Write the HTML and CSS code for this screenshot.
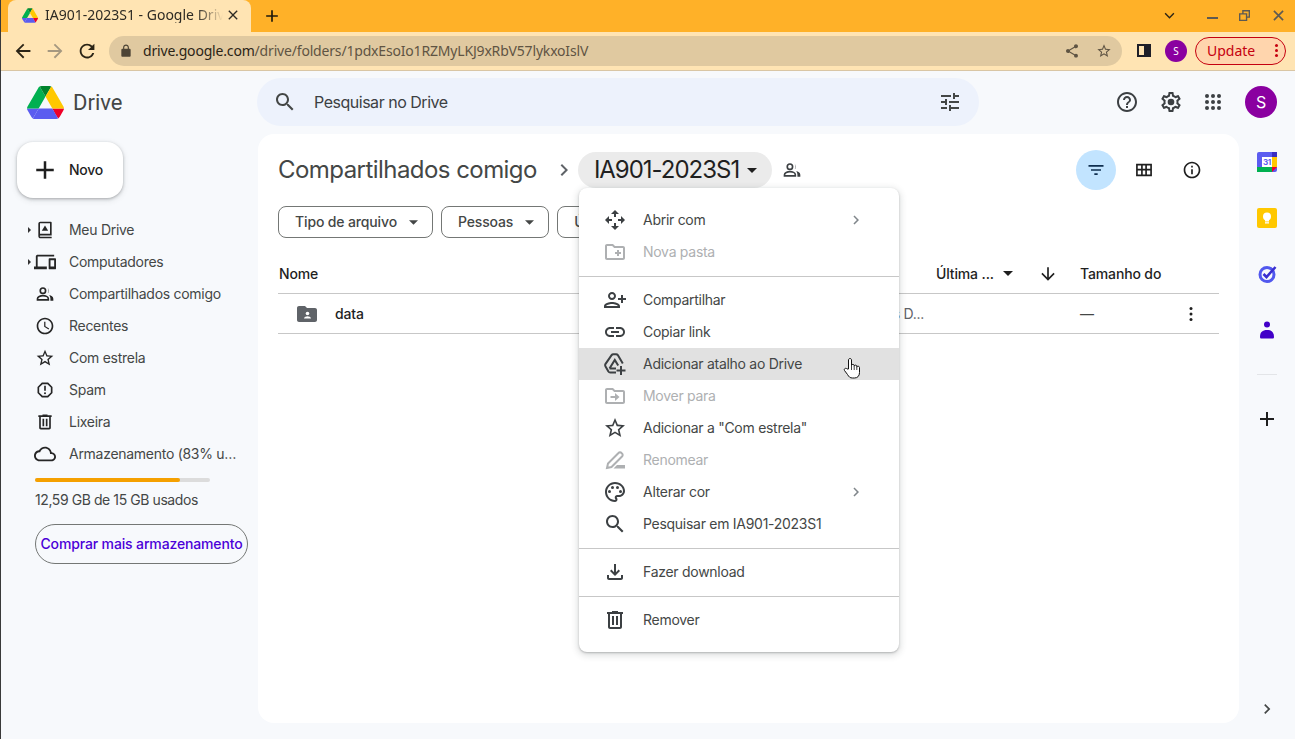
FILE: index.html
```html
<!DOCTYPE html>
<html lang="pt-BR">
<head>
  <meta charset="utf-8">
  <meta name="viewport" content="width=device-width,initial-scale=1">
  <title>IA901-2023S1 - Google Drive</title>
  <link rel="stylesheet" href="styles.css">
</head>
<body>
  <svg class="sprite" aria-hidden="true">
    <symbol id="i-drive" viewBox="0 0 87.3 78">
      <path d="m6.6 66.85 3.85 6.65c.8 1.4 1.95 2.5 3.3 3.3l13.75-23.8h-27.5c0 1.55.4 3.1 1.2 4.5z" fill="#5b5cf0"/>
      <path d="m43.65 25-13.75-23.8c-1.35.8-2.5 1.9-3.3 3.3l-25.4 44a9.06 9.06 0 0 0 -1.2 4.5h27.5z" fill="#00b050"/>
      <path d="m73.55 76.8c1.35-.8 2.5-1.9 3.3-3.3l1.6-2.75 7.65-13.25c.8-1.4 1.2-2.95 1.2-4.5h-27.502l5.852 11.5z" fill="#f00028"/>
      <path d="m43.65 25 13.75-23.8c-1.35-.8-2.9-1.2-4.5-1.2h-18.5c-1.6 0-3.15.45-4.5 1.2z" fill="#00832d"/>
      <path d="m59.8 53h-32.3l-13.75 23.8c1.35.8 2.9 1.2 4.5 1.2h50.8c1.6 0 3.15-.45 4.5-1.2z" fill="#5b5cf0"/>
      <path d="m73.4 26.5-12.7-22c-.8-1.4-1.95-2.5-3.3-3.3l-13.75 23.8 16.15 28h27.45c0-1.55-.4-3.1-1.2-4.5z" fill="#ffc800"/>
    </symbol>
    <symbol id="i-search" viewBox="0 0 24 24"><path d="M15.5 14h-.79l-.28-.27C15.41 12.59 16 11.11 16 9.5 16 5.91 13.09 3 9.5 3S3 5.91 3 9.5 5.91 16 9.5 16c1.61 0 3.09-.59 4.23-1.57l.27.28v.79l5 4.99L20.49 19l-4.99-5zm-6 0C7.01 14 5 11.99 5 9.5S7.01 5 9.5 5 14 7.01 14 9.5 11.99 14 9.5 14z"/></symbol>
    <symbol id="i-people" viewBox="0 0 24 24">
      <circle cx="9.500" cy="8" r="3.200" fill="none" stroke="currentColor" stroke-width="2"/>
      <path d="M3 19v-1.300c0-2.300 3.500-3.700 6.500-3.700s6.500 1.400 6.500 3.700V19z" fill="none" stroke="currentColor" stroke-width="2"/>
      <path d="M14.500 4.500a3.800 3.800 0 0 1 0 7c2.400-1.300 2.400-5.700 0-7zM17 13.200c2.400.5 5 1.800 5 4.500V20h-3.500v-2.300c0-1.800-.6-3.300-1.500-4.500z"/>
    </symbol>
    <symbol id="i-star" viewBox="0 0 24 24"><path d="M22 9.24l-7.19-.62L12 2 9.19 8.63 2 9.24l5.46 4.73L5.82 21 12 17.27 18.18 21l-1.63-7.03L22 9.24zM12 15.4l-3.76 2.27 1-4.28-3.32-2.88 4.38-.38L12 6.1l1.71 4.04 4.38.38-3.32 2.88 1 4.28L12 15.4z"/></symbol>
    <symbol id="i-trash" viewBox="0 0 24 24"><path d="M15 4V3H9v1H4v2h1v13c0 1.1.9 2 2 2h10c1.1 0 2-.9 2-2V6h1V4h-5zm2 15H7V6h10v13z"/><path d="M9 8h2v9H9zm4 0h2v9h-2z"/></symbol>
    <symbol id="i-chev" viewBox="0 0 24 24"><path d="M10 6L8.59 7.41 13.17 12l-4.58 4.59L10 18l6-6z"/></symbol>
    <symbol id="i-caret" viewBox="0 0 10 5"><path d="M0 0l5 5 5-5z"/></symbol>
    <symbol id="i-plus" viewBox="0 0 24 24"><path d="M19 13h-6v6h-2v-6H5v-2h6V5h2v6h6v2z"/></symbol>
    <symbol id="i-move" viewBox="0 0 24 24"><path d="M20 6h-8l-2-2H4c-1.1 0-2 .9-2 2v12c0 1.1.9 2 2 2h16c1.1 0 2-.9 2-2V8c0-1.1-.9-2-2-2zm0 12H4V6h5.17l2 2H20v10zm-8-1l4.500-4-4.500-4v3H7.500v2H12z"/></symbol>
  </svg>

  <div class="tabstrip">
    <div class="tab">
      <svg class="tab-favicon"><use href="#i-drive"/></svg>
      <span class="tab-title">IA901-2023S1 - Google Drive</span>
      <svg class="ic-16" viewBox="0 0 24 24"><path d="M19 6.41L17.59 5 12 10.59 6.41 5 5 6.41 10.59 12 5 17.59 6.41 19 12 13.41 17.59 19 19 17.59 13.41 12z"/></svg>
    </div>
    <svg class="new-tab"><use href="#i-plus"/></svg>
    <div class="window-btns">
      <svg class="win-chevron" viewBox="0 0 12 8"><path d="M1 1.5l5 5 5-5" fill="none" stroke="#2b2416" stroke-width="1.6"/></svg>
      <span class="win-min"></span>
      <svg class="win-max" viewBox="0 0 12 12"><path d="M3.5 0H12v8.500H9V12H0V3.500H3.500zM5 1.500V3.500H9V7H10.500V1.500zM1.500 5V10.500H7.500V5z" fill="#5e5a52"/></svg>
      <svg class="win-close" viewBox="0 0 12 12"><path d="M1 1l10 10M11 1L1 11" stroke="#5e5a52" stroke-width="1.800"/></svg>
    </div>
  </div>

  <div class="toolbar">
    <svg class="tool-ic"><path d="M20 11H7.83l5.59-5.59L12 4l-8 8 8 8 1.41-1.41L7.83 13H20v-2z" transform="scale(.92)"/></svg>
    <svg class="tool-ic is-off"><path d="M12 4l-1.41 1.41L16.17 11H4v2h12.17l-5.58 5.59L12 20l8-8z" transform="scale(.92)"/></svg>
    <svg class="tool-ic"><path d="M17.65 6.350C16.200 4.900 14.210 4 12 4c-4.420 0-7.990 3.580-7.990 8s3.570 8 7.990 8c3.730 0 6.840-2.550 7.730-6h-2.080c-.82 2.330-3.040 4-5.650 4-3.310 0-6-2.690-6-6s2.690-6 6-6c1.660 0 3.140.69 4.220 1.780L13 11h7V4l-2.350 2.350z" transform="scale(.92)"/></svg>
    <div class="omnibox">
      <svg class="ic-14 omni-lock" viewBox="0 0 24 24"><path d="M18 8h-1V6c0-2.760-2.240-5-5-5S7 3.240 7 6v2H6c-1.100 0-2 .9-2 2v10c0 1.100.9 2 2 2h12c1.100 0 2-.9 2-2V10c0-1.100-.9-2-2-2zM9 6c0-1.660 1.340-3 3-3s3 1.340 3 3v2H9V6z"/></svg>
      <span class="url"><b>drive.google.com</b>/drive/folders/1pdxEsoIo1RZMyLKJ9xRbV57lykxoIslV</span>
      <svg class="ic-16 omni-share" viewBox="0 0 24 24"><path d="M18 16.080c-.76 0-1.440.3-1.960.77L8.910 12.700c.05-.23.09-.46.09-.7s-.04-.47-.09-.7l7.050-4.110c.54.5 1.250.81 2.040.81 1.660 0 3-1.340 3-3s-1.340-3-3-3-3 1.340-3 3c0 .24.04.47.09.7L8.040 9.810C7.500 9.310 6.790 9 6 9c-1.660 0-3 1.340-3 3s1.340 3 3 3c.79 0 1.500-.31 2.040-.81l7.120 4.160c-.05.21-.08.43-.08.65 0 1.610 1.310 2.920 2.920 2.920s2.920-1.310 2.920-2.920-1.310-2.920-2.920-2.920z"/></svg>
      <svg class="ic-16 omni-star"><use href="#i-star"/></svg>
    </div>
    <span class="side-panel"></span>
    <span class="chrome-avatar">S</span>
    <span class="update">Update<i class="update-dots"></i></span>
  </div>

  <div class="app">
    <header class="topbar">
      <div class="brand">
        <svg class="brand-logo"><use href="#i-drive"/></svg>
        <span class="brand-name">Drive</span>
      </div>
      <div class="search">
        <svg class="ic-24"><use href="#i-search"/></svg>
        <span class="search-text">Pesquisar no Drive</span>
        <svg class="ic-24 search-tune" viewBox="0 0 24 24"><path d="M3 17v2h6v-2H3zM3 5v2h10V5H3zm10 16v-2h8v-2h-8v-2h-2v6h2zM7 9v2H3v2h4v2h2V9H7zm14 4v-2H11v2h10zm-6-4h2V7h4V5h-4V3h-2v6z"/></svg>
      </div>
      <div class="top-actions">
        <svg class="ic-24" viewBox="0 0 24 24"><path d="M11 18h2v-2h-2v2zm1-16C6.480 2 2 6.480 2 12s4.480 10 10 10 10-4.480 10-10S17.520 2 12 2zm0 18c-4.410 0-8-3.590-8-8s3.590-8 8-8 8 3.590 8 8-3.590 8-8 8zm0-14c-2.210 0-4 1.790-4 4h2c0-1.100.9-2 2-2s2 .9 2 2c0 2-3 1.750-3 5h2c0-2.250 3-2.500 3-5 0-2.210-1.790-4-4-4z"/></svg>
        <svg class="ic-24" viewBox="0 0 24 24"><path d="M19.430 12.980c.04-.32.07-.64.07-.98 0-.34-.03-.66-.07-.98l2.110-1.650c.19-.15.24-.42.12-.64l-2-3.460c-.09-.16-.26-.25-.44-.25-.06 0-.12.01-.17.03l-2.490 1c-.52-.4-1.080-.73-1.690-.98l-.38-2.650C14.460 2.180 14.250 2 14 2h-4c-.25 0-.46.18-.49.42l-.38 2.650c-.61.25-1.170.59-1.690.98l-2.490-1c-.06-.02-.12-.03-.18-.03-.17 0-.34.09-.43.25l-2 3.460c-.13.22-.07.49.12.64l2.110 1.650c-.04.32-.07.65-.07.98 0 .33.03.66.07.98l-2.110 1.650c-.19.15-.24.42-.12.64l2 3.460c.09.16.26.25.44.25.06 0 .12-.01.17-.03l2.490-1c.52.4 1.080.73 1.690.98l.38 2.650c.03.24.24.42.49.42h4c.25 0 .46-.18.49-.42l.38-2.650c.61-.25 1.170-.59 1.690-.98l2.490 1c.06.02.12.03.18.03.17 0 .34-.09.43-.25l2-3.460c.12-.22.07-.49-.12-.64l-2.110-1.650zm-1.980-1.710c.04.31.05.52.05.73 0 .21-.02.43-.05.73l-.14 1.130.89.7 1.080.84-.7 1.210-1.270-.51-1.040-.42-.9.68c-.43.32-.84.56-1.250.73l-1.060.43-.16 1.130-.2 1.350h-1.400l-.19-1.350-.16-1.130-1.060-.43c-.43-.18-.83-.41-1.230-.71l-.91-.7-1.060.43-1.270.51-.7-1.210 1.080-.84.89-.7-.14-1.130c-.03-.31-.05-.54-.05-.74s.02-.43.05-.73l.14-1.130-.89-.7-1.080-.84.7-1.210 1.270.51 1.040.42.9-.68c.43-.32.84-.56 1.250-.73l1.060-.43.16-1.130.2-1.350h1.390l.19 1.350.16 1.130 1.060.43c.43.18.83.41 1.230.71l.91.7 1.060-.43 1.270-.51.7 1.210-1.070.85-.89.7.14 1.130z"/><circle cx="12" cy="12" r="3.300"/></svg>
        <svg class="ic-24 apps" viewBox="0 0 24 24"><circle cx="6" cy="6" r="2"/><circle cx="12" cy="6" r="2"/><circle cx="18" cy="6" r="2"/><circle cx="6" cy="12" r="2"/><circle cx="12" cy="12" r="2"/><circle cx="18" cy="12" r="2"/><circle cx="6" cy="18" r="2"/><circle cx="12" cy="18" r="2"/><circle cx="18" cy="18" r="2"/></svg>
        <span class="avatar">S</span>
      </div>
    </header>

    <div class="workspace">
      <aside class="sidebar">
        <div class="new-btn">
          <svg class="new-plus"><use href="#i-plus"/></svg>
          <span>Novo</span>
        </div>
        <nav class="nav">
          <div class="nav-item has-arrow">
            <svg class="ic-20" viewBox="0 0 24 24"><path d="M19 2H6.500C5.100 2 4 3.100 4 4.500v15C4 20.900 5.100 22 6.500 22H20v-2H6.500a.5.5 0 0 1 0-1.500H20V3a1 1 0 0 0-1-1zm-1 14.500H6V4h12z"/><path d="M12 6.500l3.800 6.500H8.200z"/></svg>
            <span>Meu Drive</span>
          </div>
          <div class="nav-item has-arrow">
            <svg class="ic-20 icon-wide" viewBox="0 0 24 24"><path d="M4 6h18V4H4c-1.100 0-2 .9-2 2v11H0v3h14v-3H4V6zm19 2h-6c-.55 0-1 .45-1 1v10c0 .55.45 1 1 1h6c.55 0 1-.45 1-1V9c0-.55-.45-1-1-1zm-1 9h-4v-7h4v7z"/></svg>
            <span>Computadores</span>
          </div>
          <div class="nav-item">
            <svg class="ic-20"><use href="#i-people"/></svg>
            <span>Compartilhados comigo</span>
          </div>
          <div class="nav-item">
            <svg class="ic-20" viewBox="0 0 24 24"><path d="M11.990 2C6.470 2 2 6.480 2 12s4.470 10 9.990 10C17.520 22 22 17.520 22 12S17.520 2 11.990 2zM12 20c-4.420 0-8-3.580-8-8s3.580-8 8-8 8 3.580 8 8-3.580 8-8 8zm.5-13H11v6l5.250 3.150.75-1.230-4.500-2.670z"/></svg>
            <span>Recentes</span>
          </div>
          <div class="nav-item">
            <svg class="ic-20"><use href="#i-star"/></svg>
            <span>Com estrela</span>
          </div>
          <div class="nav-item">
            <svg class="ic-20" viewBox="0 0 24 24"><path d="M15.730 3H8.270L3 8.270v7.460L8.270 21h7.460L21 15.730V8.270L15.730 3zM19 14.900L14.900 19H9.100L5 14.900V9.100L9.100 5h5.800L19 9.100v5.800z"/><path d="M11 7h2v6h-2z"/><circle cx="12" cy="16" r="1.200"/></svg>
            <span>Spam</span>
          </div>
          <div class="nav-item">
            <svg class="ic-20"><use href="#i-trash"/></svg>
            <span>Lixeira</span>
          </div>
          <div class="nav-item">
            <svg class="ic-20 icon-wide" viewBox="0 0 24 24"><path d="M19.350 10.040C18.670 6.590 15.640 4 12 4 9.110 4 6.600 5.640 5.350 8.040 2.340 8.360 0 10.910 0 14c0 3.310 2.690 6 6 6h13c2.760 0 5-2.240 5-5 0-2.640-2.050-4.780-4.650-4.960zM19 18H6c-2.210 0-4-1.790-4-4s1.790-4 4-4h.71C7.370 7.690 9.480 6 12 6c3.040 0 5.500 2.460 5.500 5.500v.5H19c1.660 0 3 1.340 3 3s-1.340 3-3 3z"/></svg>
            <span class="nav-clip">Armazenamento (83% usado)</span>
          </div>
        </nav>
        <div class="storage-bar"><div class="storage-fill" style="width:83%"></div></div>
        <div class="storage-text">12,59 GB de 15 GB usados</div>
        <div class="buy-btn">Comprar mais armazenamento</div>
      </aside>

      <main class="card">
        <div class="crumbs">
          <h1 class="crumb-root">Compartilhados comigo</h1>
          <svg class="crumb-sep"><use href="#i-chev"/></svg>
          <div class="crumb-chip">
            <span>IA901-2023S1</span>
            <svg class="caret"><use href="#i-caret"/></svg>
          </div>
          <svg class="ic-20 crumb-people"><use href="#i-people"/></svg>
          <div class="view-btns">
            <span class="filter-toggle"><svg class="ic-20" viewBox="0 0 24 24"><path d="M10 18h4v-2h-4v2zM3 6v2h18V6H3zm3 7h12v-2H6v2z"/></svg></span>
            <span class="view-btn"><svg class="ic-20" viewBox="0 0 24 24"><path d="M2.500 4.500h19v15h-19zM4.500 6.500v4h4v-4zm6 0v4h3v-4zm5 0v4h4v-4zM4.500 12.500v5h4v-5zm6 0v5h3v-5zm5 0v5h4v-5z" fill-rule="evenodd"/></svg></span>
            <span class="view-btn"><svg class="ic-20" viewBox="0 0 24 24"><path d="M11 7h2v2h-2zm0 4h2v6h-2zm1-9C6.480 2 2 6.480 2 12s4.480 10 10 10 10-4.480 10-10S17.520 2 12 2zm0 18c-4.410 0-8-3.590-8-8s3.590-8 8-8 8 3.590 8 8-3.590 8-8 8z"/></svg></span>
          </div>
        </div>

        <div class="filters">
          <div class="chip">Tipo de arquivo<svg class="caret-sm"><use href="#i-caret"/></svg></div>
          <div class="chip">Pessoas<svg class="caret-sm"><use href="#i-caret"/></svg></div>
          <div class="chip">Última modificação<svg class="caret-sm"><use href="#i-caret"/></svg></div>
        </div>

        <div class="table">
          <div class="row row-head">
            <div class="cell-name">Nome</div>
            <div class="cell-owner"></div>
            <div class="cell-date">
              <span>Última ...</span>
              <svg class="caret"><use href="#i-caret"/></svg>
              <svg class="ic-20 sort-arrow" viewBox="0 0 24 24"><path d="M20 12l-1.410-1.410L13 16.170V4h-2v12.170l-5.580-5.590L4 12l8 8 8-8z"/></svg>
            </div>
            <div class="cell-size">Tamanho do</div>
          </div>
          <div class="row">
            <div class="cell-name">
              <svg class="folder" viewBox="0 0 24 24"><path d="M20 6h-8l-2-2H4c-1.100 0-2 .9-2 2v12c0 1.100.9 2 2 2h16c1.100 0 2-.9 2-2V8c0-1.100-.9-2-2-2z"/><circle cx="12.500" cy="11.500" r="1.800" fill="#fff"/><path d="M9 16.500c0-1.500 2.300-2.200 3.500-2.200s3.500.7 3.500 2.200z" fill="#fff"/></svg>
              <span class="file-name">data</span>
            </div>
            <div class="cell-owner owner-text">s D...</div>
            <div class="cell-date"></div>
            <div class="cell-size size-text">
              <span>—</span>
              <svg class="ic-20" viewBox="0 0 24 24"><circle cx="12" cy="5.500" r="1.800"/><circle cx="12" cy="12" r="1.800"/><circle cx="12" cy="18.500" r="1.800"/></svg>
            </div>
          </div>
        </div>
      </main>

      <aside class="rail">
        <svg class="rail-ic" viewBox="0 0 20 20">
          <rect x="0" y="0" width="20" height="20" rx="2" fill="#5b5cf0"/>
          <rect x="15" y="0" width="5" height="5" fill="#3a2fc0"/>
          <rect x="15" y="5" width="5" height="10" fill="#ffc800"/>
          <rect x="0" y="15" width="15" height="5" fill="#00b050"/>
          <path d="M15 15h5l-5 5z" fill="#f00028"/>
          <rect x="5" y="5" width="10" height="10" fill="#fff"/>
          <text x="10" y="13" class="cal-day">31</text>
        </svg>
        <svg class="rail-ic" viewBox="0 0 20 20">
          <rect width="20" height="20" rx="2" fill="#ffc800"/>
          <circle cx="10" cy="8.500" r="4" fill="#fff"/>
          <rect x="8" y="11" width="4" height="2.500" fill="#fff"/>
          <rect x="8" y="14.200" width="4" height="1.300" fill="#fff"/>
        </svg>
        <svg class="rail-ic" viewBox="0 0 20 20">
          <circle cx="10" cy="10.500" r="7" fill="none" stroke="#5158ee" stroke-width="3"/>
          <path d="M6.500 10l3 3L18.500 3" fill="none" stroke="#3a2fd0" stroke-width="2.600"/>
        </svg>
        <svg class="rail-ic" viewBox="0 0 20 20">
          <circle cx="10" cy="4.500" r="3" fill="#4200c8"/>
          <path d="M3 17c0-5 2.500-7 7-7s7 2 7 7c0 1-.6 1.500-1.500 1.500h-11C3.600 18.500 3 18 3 17z" fill="#4200c8"/>
        </svg>
        <div class="rail-line"></div>
        <svg class="ic-24 rail-plus"><use href="#i-plus"/></svg>
        <svg class="ic-20 rail-chevron"><use href="#i-chev"/></svg>
      </aside>
    </div>
  </div>

  <div class="menu">
    <div class="menu-item">
      <svg class="ic-24" viewBox="0 0 24 24"><path d="M12 2l4 4h-3v3h-2V6H8zM12 22l-4-4h3v-3h2v3h3zM2 12l4-4v3h3v2H6v3zM22 12l-4 4v-3h-3v-2h3V8z"/></svg>
      <span>Abrir com</span>
      <svg class="menu-more"><use href="#i-chev"/></svg>
    </div>
    <div class="menu-item is-off">
      <svg class="ic-24" viewBox="0 0 24 24"><path d="M20 6h-8l-2-2H4c-1.110 0-1.990.89-1.990 2L2 18c0 1.110.89 2 2 2h16c1.110 0 2-.89 2-2V8c0-1.110-.89-2-2-2zm0 12H4V6h5.170l2 2H20v10zm-8-4h2v2h2v-2h2v-2h-2v-2h-2v2h-2v2z"/></svg>
      <span>Nova pasta</span>
    </div>
    <hr class="menu-line">
    <div class="menu-item">
      <svg class="ic-24 flip" viewBox="0 0 24 24"><path d="M15 12c2.210 0 4-1.790 4-4s-1.790-4-4-4-4 1.790-4 4 1.790 4 4 4zm0-6c1.100 0 2 .9 2 2s-.9 2-2 2-2-.9-2-2 .9-2 2-2zm0 8c-2.670 0-8 1.340-8 4v2h16v-2c0-2.660-5.330-4-8-4zm-6 4c.22-.72 3.310-2 6-2 2.700 0 5.800 1.290 6 2H9zm-3-3v-3h3v-2H6V7H4v3H1v2h3v3h2z"/></svg>
      <span>Compartilhar</span>
    </div>
    <div class="menu-item">
      <svg class="ic-24" viewBox="0 0 24 24"><path d="M3.900 12c0-1.710 1.390-3.100 3.100-3.100h4V7H7c-2.760 0-5 2.240-5 5s2.240 5 5 5h4v-1.900H7c-1.710 0-3.100-1.390-3.100-3.100zM8 13h8v-2H8v2zm9-6h-4v1.900h4c1.710 0 3.100 1.390 3.100 3.100s-1.390 3.100-3.100 3.100h-4V17h4c2.760 0 5-2.240 5-5s-2.240-5-5-5z"/></svg>
      <span>Copiar link</span>
    </div>
    <div class="menu-item is-hover">
      <svg class="ic-24" viewBox="0 0 24 24"><path d="M13 20.500H7.200c-.8 0-1.400-.4-1.800-1l-3-5.200c-.4-.7-.4-1.500 0-2.200l6.200-9c.4-.6 1-.9 1.700-.9h2.800c.7 0 1.300.3 1.700.9l5 8.400" fill="none" stroke="currentColor" stroke-width="2"/><path d="M6.500 16.500L11.800 8l3.400 5.500M6.500 16.500H13" fill="none" stroke="currentColor" stroke-width="2"/><path d="M19 14v3.500h3.500v2H19V23h-2v-3.500h-3.500v-2H17V14z"/></svg>
      <span>Adicionar atalho ao Drive</span>
    </div>
    <div class="menu-item is-off">
      <svg class="ic-24"><use href="#i-move"/></svg>
      <span>Mover para</span>
    </div>
    <div class="menu-item">
      <svg class="ic-24"><use href="#i-star"/></svg>
      <span>Adicionar a "Com estrela"</span>
    </div>
    <div class="menu-item is-off">
      <svg class="ic-24" viewBox="0 0 24 24"><path d="M4 20l1-4.500L15.500 5a2 2 0 0 1 3 0l.5.5a2 2 0 0 1 0 3L8.500 19z" fill="none" stroke="currentColor" stroke-width="2"/><path d="M14 17h8v3.500H10.500z"/></svg>
      <span>Renomear</span>
    </div>
    <div class="menu-item">
      <svg class="ic-24" viewBox="0 0 24 24"><path d="M12 22C6.490 22 2 17.510 2 12S6.490 2 12 2s10 4.040 10 9c0 3.310-2.690 6-6 6h-1.770c-.28 0-.5.22-.5.5 0 .12.05.23.13.33.41.47.64 1.060.64 1.670 0 1.380-1.120 2.500-2.500 2.500zm0-18c-4.410 0-8 3.590-8 8s3.590 8 8 8c.28 0 .5-.22.5-.5 0-.16-.08-.28-.14-.35-.41-.46-.63-1.050-.63-1.650 0-1.380 1.120-2.500 2.500-2.500H16c2.210 0 4-1.790 4-4 0-3.860-3.590-7-8-7z"/><circle cx="6.500" cy="11.500" r="1.500"/><circle cx="9.500" cy="7.500" r="1.500"/><circle cx="14.500" cy="7.500" r="1.500"/><circle cx="17.500" cy="11.500" r="1.500"/></svg>
      <span>Alterar cor</span>
      <svg class="menu-more"><use href="#i-chev"/></svg>
    </div>
    <div class="menu-item">
      <svg class="ic-24"><use href="#i-search"/></svg>
      <span>Pesquisar em IA901-2023S1</span>
    </div>
    <hr class="menu-line">
    <div class="menu-item">
      <svg class="ic-24" viewBox="0 0 24 24"><path d="M18 15v3H6v-3H4v3c0 1.100.9 2 2 2h12c1.100 0 2-.9 2-2v-3h-2zm-1-4l-1.410-1.410L13 12.170V4h-2v8.170L8.410 9.590 7 11l5 5 5-5z"/></svg>
      <span>Fazer download</span>
    </div>
    <hr class="menu-line">
    <div class="menu-item">
      <svg class="ic-24"><use href="#i-trash"/></svg>
      <span>Remover</span>
    </div>
  </div>

  <svg class="cursor" viewBox="0 0 18 22"><path d="M5.500 12V3c0-2 3-2 3 0v5.500c0-1.500 2.700-1.500 2.700 0v.7c0-1.400 2.600-1.400 2.600 0v.9c0-1.300 2.700-1.200 2.700.4v5c0 3.500-2 5.500-5 5.500h-2c-2.500 0-3.500-1-5-3.500L1.500 13.500c-1-1.800 1.500-3 2.500-1.500z" fill="#fff" stroke="#111" stroke-width="1"/><path d="M8.500 8.500V13M11.200 9.200V13M13.800 10V13" stroke="#111" stroke-width=".8" fill="none"/></svg>
</body>
</html>
```

FILE: styles.css
```css
:root {
  --ink: #1f1f1f;
  --ink-soft: #444746;
  --ink-icon: #3c4043;
  --ink-off: #aeb0b2;
  --line: #c7c7c7;
  --app-bg: #f7f9fc;
  --ui-font: Inter, Roboto, "Liberation Sans", sans-serif;
  --chrome-font: "Noto Sans", "Open Sans", sans-serif;
}
* {
  box-sizing: border-box;
  margin: 0;
  padding: 0;
}
html, body {
  height: 739px;
  overflow: hidden;
}
body {
  position: relative;
  display: flex;
  flex-direction: column;
  background: var(--app-bg);
  color: var(--ink);
  font-family: var(--ui-font);
  font-size: 14px;
  line-height: 16px;
  letter-spacing: -.02em;
  border-left: 1px solid #3a3a3a;
}
svg {
  display: block;
  flex: none;
  fill: currentColor;
}
.sprite { display: none; }
.ic-14 { width: 14px; height: 14px; }
.ic-16 { width: 16px; height: 16px; }
.ic-20 { width: 20px; height: 20px; }
.ic-24 { width: 24px; height: 24px; }

/* browser chrome */
.tabstrip {
  display: flex;
  align-items: flex-end;
  height: 32px;
  background: #ffb128;
  padding-left: 7px;
  letter-spacing: 0;
}
.tab {
  display: flex;
  align-items: center;
  width: 243px;
  height: 32px;
  padding: 0 0 2px 14px;
  background: #ffe4b3;
  border-radius: 8px 8px 0 0;
  font-family: var(--chrome-font);
  font-size: 14px;
  color: #2d2a24;
}
.tab-favicon { width: 16px; height: 15px; }
.tab-title {
  width: 178px;
  margin: 0 2px 0 7px;
  white-space: nowrap;
  overflow: hidden;
  -webkit-mask-image: linear-gradient(90deg, #000 85%, transparent);
  mask-image: linear-gradient(90deg, #000 85%, transparent);
}
.new-tab {
  width: 20px;
  height: 20px;
  margin: 0 0 6px 11px;
  color: #201a0c;
}
.window-btns {
  display: flex;
  align-items: center;
  margin-left: auto;
  height: 32px;
  padding-bottom: 2px;
}
.win-chevron { width: 11px; height: 7px; margin-right: 32px; }
.win-min { width: 11px; height: 2px; margin: 6px 21px 0 0; background: #5e5a52; }
.win-max { width: 11px; height: 11px; margin-right: 23px; }
.win-close { width: 11px; height: 11px; margin-right: 11px; }

.toolbar {
  display: flex;
  align-items: center;
  height: 39px;
  padding: 0 9px 1px 11px;
  background: #ffe4b3;
  border-bottom: 1px solid #d9c6a5;
  color: #2b2416;
  font-family: var(--chrome-font);
  letter-spacing: 0;
}
.tool-ic {
  width: 22px;
  height: 22px;
  margin-right: 10px;
}
.is-off.tool-ic { color: #a59880; }
.omnibox {
  display: flex;
  align-items: center;
  flex: none;
  width: 1013px;
  height: 30px;
  margin-left: 1px;
  padding: 0 9px 0 10px;
  background: #e0c9a0;
  border-radius: 15px;
  color: #5f5443;
}
.omni-lock { color: #4d4436; }
.url {
  margin-left: 10px;
  font-size: 14px;
  letter-spacing: -.18px;
  white-space: nowrap;
}
.url b { font-weight: 400; color: #2b2416; }
.omni-share { margin-left: auto; margin-right: 16px; }
.omni-star { margin-right: 1px; }
.side-panel {
  flex: none;
  width: 14px;
  height: 13px;
  margin-left: 15px;
  border: 2px solid #1f1f28;
  border-right-width: 7px;
}
.chrome-avatar {
  display: flex;
  align-items: center;
  justify-content: center;
  flex: none;
  width: 22px;
  height: 22px;
  margin-left: 14px;
  border-radius: 50%;
  background: #8a00a0;
  color: #fff;
  font-size: 10px;
}
.update {
  display: flex;
  align-items: center;
  justify-content: space-between;
  flex: none;
  width: 91px;
  height: 28px;
  margin-left: 8px;
  padding: 0 7px 0 11px;
  border: 1px solid #c5000f;
  border-radius: 14px;
  background: #ffd5ad;
  color: #c5000f;
  font-size: 14px;
}
.update-dots {
  width: 3px;
  height: 3px;
  border-radius: 50%;
  background: #c5000f;
  box-shadow: 0 -5px #c5000f, 0 5px #c5000f;
}

/* drive */
.app {
  flex: 1;
  display: flex;
  flex-direction: column;
  min-height: 0;
}
.topbar {
  display: flex;
  align-items: center;
  height: 63px;
  padding-bottom: 1px;
}
.brand {
  display: flex;
  align-items: center;
  width: 256px;
  padding-left: 26px;
}
.brand-logo { width: 37px; height: 33px; }
.brand-name {
  margin: 2px 0 0 9px;
  font-family: Roboto, sans-serif;
  font-size: 22px;
  letter-spacing: 0;
  color: #444746;
}
.search {
  display: flex;
  align-items: center;
  width: 722px;
  height: 48px;
  padding: 0 17px 0 16px;
  background: #edf2fc;
  border-radius: 24px;
  color: #444746;
}
.search-text {
  margin-left: 17px;
  font-size: 16px;
  letter-spacing: -.03em;
  color: #3c4043;
}
.search-tune { margin-left: auto; }
.top-actions {
  display: flex;
  align-items: center;
  margin-left: auto;
  padding-right: 18px;
  gap: 20px;
  color: var(--ink-icon);
}
.apps { margin-left: -2px; }
.avatar {
  display: flex;
  align-items: center;
  justify-content: center;
  width: 32px;
  height: 32px;
  border-radius: 50%;
  background: #8a00a0;
  color: #fff;
  font-size: 16px;
}

.workspace {
  flex: 1;
  display: flex;
  min-height: 0;
}
.sidebar {
  width: 257px;
  padding: 8px 0 0 16px;
  flex: none;
}
.new-btn {
  display: flex;
  align-items: center;
  width: 106px;
  height: 56px;
  padding-left: 13px;
  gap: 9px;
  background: #fff;
  border-radius: 16px;
  font-weight: 500;
  font-size: 14px;
  box-shadow: 0 1px 3px rgba(60, 64, 67, .35), 0 2px 6px rgba(60, 64, 67, .15);
}
.new-plus { width: 30px; height: 30px; }
.nav { margin-top: 16px; }
.nav-item {
  position: relative;
  display: flex;
  align-items: center;
  height: 32px;
  padding-left: 18px;
  color: var(--ink-soft);
}
.nav-item svg { color: #262626; margin-right: 14px; }
.nav-item .icon-wide { width: 22px; height: 22px; margin: 0 13px 0 -1px; }
.has-arrow::before {
  content: "";
  position: absolute;
  left: 11px;
  top: 13px;
  border: 3px solid transparent;
  border-left: 3.500px solid #333;
  border-right: 0;
}
.nav-clip {
  width: 170px;
  white-space: nowrap;
  overflow: hidden;
  text-overflow: ellipsis;
}
.storage-bar {
  width: 175px;
  height: 4px;
  margin: 8px 0 0 18px;
  background: #dcdcdc;
  border-radius: 2px;
}
.storage-fill {
  height: 4px;
  background: #f5a000;
  border-radius: 2px;
}
.storage-text {
  margin: 9px 0 0 18px;
  color: #444746;
  line-height: 18px;
  letter-spacing: -.03em;
}
.buy-btn {
  display: flex;
  align-items: center;
  justify-content: center;
  width: 213px;
  height: 40px;
  margin: 15px 0 0 18px;
  border: 1px solid #747775;
  border-radius: 20px;
  color: #4b00d8;
  font-weight: 500;
  letter-spacing: -.01em;
  white-space: nowrap;
}

.card {
  flex: none;
  width: 981px;
  height: 589px;
  padding: 0 20px;
  background: #fff;
  border-radius: 16px;
}
.crumbs {
  display: flex;
  align-items: center;
  height: 72px;
}
.crumb-root {
  font-size: 24px;
  font-weight: 400;
  line-height: 28px;
  letter-spacing: -.023em;
  color: #444746;
  white-space: nowrap;
}
.crumb-sep {
  width: 24px;
  height: 24px;
  margin: 0 2px 0 15px;
  color: #5f6368;
}
.crumb-chip {
  display: flex;
  align-items: center;
  flex: none;
  height: 36px;
  width: 194px;
  padding-left: 16px;
  background: #ebebeb;
  border-radius: 18px;
  font-size: 24px;
  line-height: 28px;
  letter-spacing: -.042em;
  color: #1f1f1f;
  white-space: nowrap;
}
.caret { width: 10px; height: 5px; margin-left: 8px; }
.crumb-people { margin-left: 10px; color: #3c4043; }
.view-btns {
  display: flex;
  align-items: center;
  margin-left: auto;
  margin-right: 7px;
  gap: 8px;
  color: #1f1f1f;
}
.filter-toggle, .view-btn {
  display: flex;
  align-items: center;
  justify-content: center;
  width: 40px;
  height: 40px;
  border-radius: 50%;
}
.filter-toggle {
  background: #c2e4ff;
  color: #0f2f50;
}
.filters {
  display: flex;
  gap: 8px;
}
.chip {
  display: flex;
  align-items: center;
  height: 32px;
  padding: 0 14px 0 16px;
  border: 1px solid #747775;
  border-radius: 8px;
  color: #444746;
  font-weight: 500;
  letter-spacing: -.01em;
  white-space: nowrap;
}
.caret-sm { width: 9px; height: 5px; margin-left: 12px; color: #444746; }
.table { margin-top: 16px; }
.row {
  display: grid;
  grid-template-columns: 510px 148px 144px 1fr;
  align-items: center;
  height: 40px;
  border-bottom: 1px solid var(--line);
}
.row-head {
  font-weight: 500;
  letter-spacing: -.01em;
  color: #1f1f1f;
}
.cell-name {
  display: flex;
  align-items: center;
  padding-left: 1px;
}
.folder {
  width: 24px;
  height: 24px;
  margin-left: 16px;
  color: #5f6368;
}
.file-name {
  margin-left: 16px;
  font-weight: 500;
  letter-spacing: -.01em;
  color: #1f1f1f;
}
.owner-text {
  padding-right: 12px;
  text-align: right;
  color: #5f6368;
}
.cell-date {
  display: flex;
  align-items: center;
}
.cell-date .caret { margin-left: 9px; }
.sort-arrow { margin-left: 25px; }
.size-text {
  display: flex;
  align-items: center;
  color: #444746;
  padding-right: 18px;
}
.size-text svg { margin-left: auto; color: #1f1f1f; }

.rail {
  flex: 1;
  position: relative;
  display: flex;
  flex-direction: column;
  align-items: center;
  padding-top: 18px;
  height: 605px;
}
.rail-ic { width: 20px; height: 20px; margin-bottom: 36px; }
.rail-line {
  width: 20px;
  height: 1px;
  margin-top: -2px;
  background: #e3e5e8;
}
.rail-plus { margin-top: 32px; color: #1f1f1f; }
.rail-chevron {
  margin-top: auto;
  margin-bottom: 20px;
  color: #444746;
}
.cal-day {
  font-family: var(--ui-font);
  font-size: 8px;
  font-weight: 700;
  fill: #5b5cf0;
  text-anchor: middle;
}

/* context menu, opened over the table */
.menu {
  position: absolute;
  left: 578px;
  top: 188px;
  width: 320px;
  padding: 16px 0;
  background: #fff;
  border-radius: 8px;
  box-shadow: 0 2px 6px 2px rgba(60, 64, 67, .15), 0 1px 2px rgba(60, 64, 67, .3);
}
.menu-item {
  display: flex;
  align-items: center;
  height: 32px;
  padding: 0 24px;
  gap: 16px;
  color: var(--ink-soft);
}
.menu-item svg { color: #3c4043; }
.is-off, .menu-item.is-off svg { color: var(--ink-off); }
.is-hover { background: #e1e1e1; }
.flip { transform: scaleX(-1); }
.menu-more {
  width: 18px;
  height: 18px;
  margin-left: auto;
  margin-right: 10px;
}
.menu-item .menu-more { color: #80868b; }
.menu-line {
  height: 1px;
  margin: 8px 0 7px;
  border: 0;
  background: var(--line);
}
.cursor {
  position: absolute;
  left: 842px;
  top: 357px;
  width: 18px;
  height: 22px;
}
```
